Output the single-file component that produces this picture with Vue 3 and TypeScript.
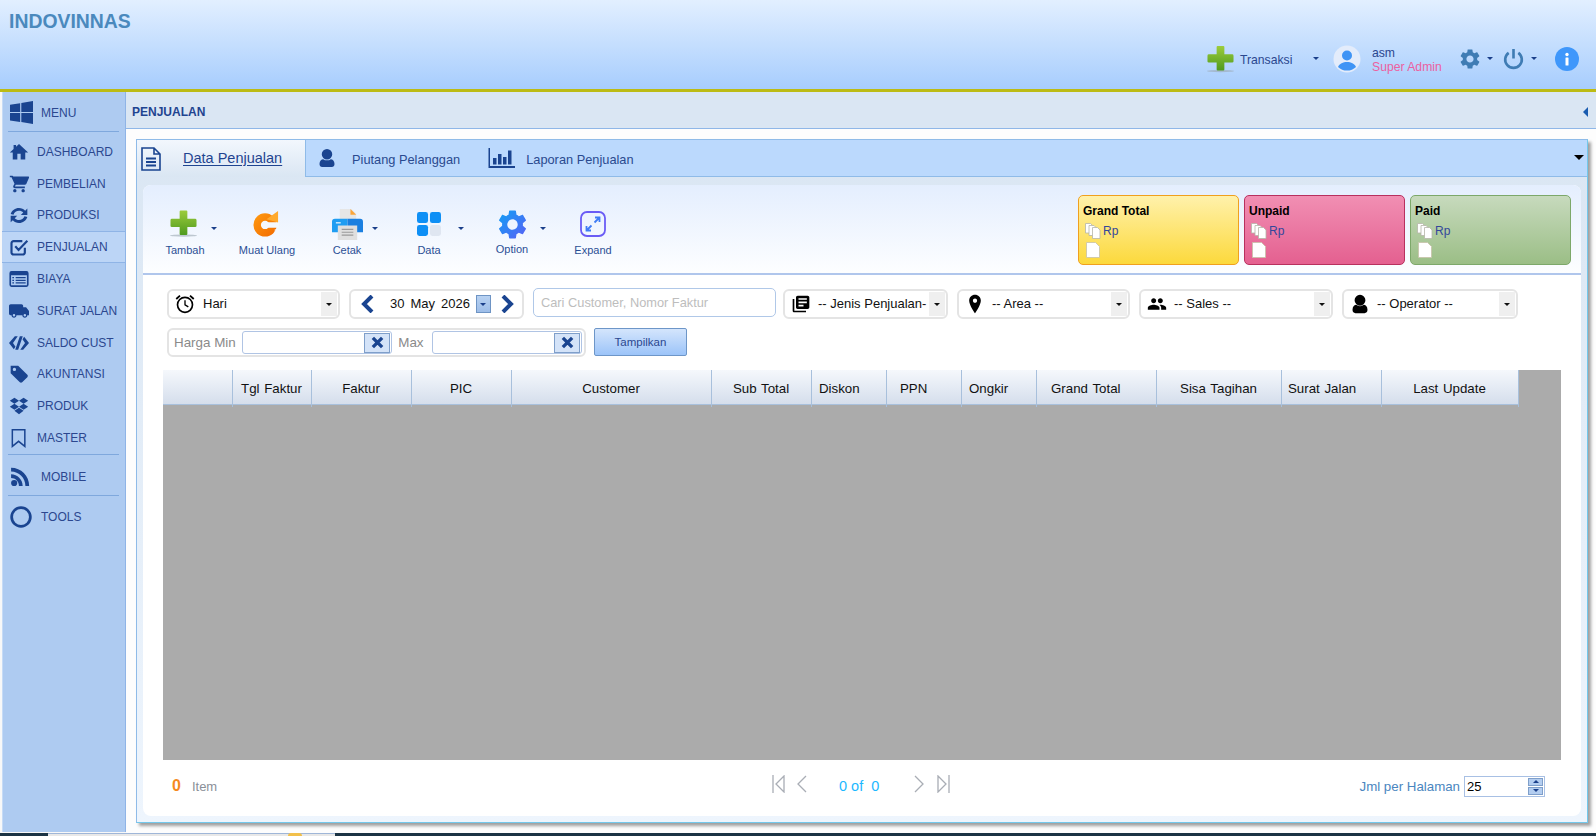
<script setup lang="ts">
import { computed } from 'vue'

interface NavItem {
  label: string
  d: string
  active?: boolean
  stroke?: boolean
  thin?: boolean
}

const navTop: NavItem[] = [
  { label: 'DASHBOARD', d: 'M10 21v-7h4v7h5.5v-8.5H23L12 2.5 8.5 5.6V3.5H5.5v4.8L1 12.5h3.5V21z' },
  { label: 'PEMBELIAN', d: 'M7 18c-1.1 0-2 .9-2 2s.9 2 2 2 2-.9 2-2-.9-2-2-2zM1 2v2h2l3.6 7.59-1.35 2.45c-.16.28-.25.61-.25.96 0 1.1.9 2 2 2h12v-2H7.42c-.14 0-.25-.11-.25-.25l.03-.12.9-1.63h10.9c.75 0 1.41-.41 1.75-1.03L24 4.5c.08-.14.12-.31.12-.48 0-.55-.45-1-1-1H5.21l-.94-1H1zm16 16c-1.1 0-2 .9-2 2s.9 2 2 2 2-.9 2-2-.9-2-2-2z' },
  { label: 'PRODUKSI', d: 'M12 3.5c3 0 5.6 1.3 7.4 3.3L22 4.2V12h-7.8l2.9-2.9C15.9 7.8 14 7 12 7c-3 0-5.6 1.9-6.6 4.6L2 10.7C3.4 6.5 7.3 3.5 12 3.5zM2 13h7.8l-2.9 2.9C8.1 17.2 10 18 12 18c3 0 5.6-1.9 6.6-4.6l3.4.9c-1.4 4.2-5.3 7.2-10 7.2-3 0-5.6-1.3-7.4-3.3L2 20.8z' },
  { label: 'PENJUALAN', active: true, stroke: true, d: 'M19 13v5.5a2.5 2.5 0 0 1-2.5 2.5h-11A2.5 2.5 0 0 1 3 18.5v-11A2.5 2.5 0 0 1 5.5 5H16M7.5 11l4 4.5L22 4.5' },
  { label: 'BIAYA', d: 'M3 2.5h18A2.5 2.5 0 0 1 23.5 5v14a2.5 2.5 0 0 1-2.5 2.5H3A2.5 2.5 0 0 1 .5 19V5A2.5 2.5 0 0 1 3 2.5zM2.5 7.5v12h19v-12zM4 9.5h2V11H4zM8 9.5h12V11H8zM4 12.8h2v1.5H4zM8 12.8h12v1.5H8zM4 16h2v1.5H4zM8 16h12v1.5H8z' },
  { label: 'SURAT JALAN', d: 'M17 7.5h3.5L24 12v5h-2c0 1.66-1.34 3-3 3s-3-1.34-3-3H9c0 1.66-1.34 3-3 3s-3-1.34-3-3H2c-1.1 0-2-.9-2-2V6c0-1.1.9-2 2-2h13c1.1 0 2 .9 2 2zM6 18.5a1.5 1.5 0 1 0 0-3 1.5 1.5 0 0 0 0 3zm13 0a1.5 1.5 0 1 0 0-3 1.5 1.5 0 0 0 0 3z' },
  { label: 'SALDO CUST', d: 'M7 4h3.5L4.8 12l3 4.5-2 3L0 12zM17 20h-3.5l5.7-8-3-4.5 2-3L24 12zM13 4h3.5L11 20H7.5z' },
  { label: 'AKUNTANSI', d: 'M2 2h9l11 11c.8.8.8 2 0 2.8L15.8 22c-.8.8-2 .8-2.8 0L2 11zM6.5 8.5a2 2 0 1 0 0-4 2 2 0 0 0 0 4z' },
  { label: 'PRODUK', d: 'M6.5 2L12 5.6 6.5 9.2 1 5.6zM17.5 2L23 5.6l-5.5 3.6L12 5.6zM1 12.8l5.5-3.6 5.5 3.6-5.5 3.6zM17.5 9.2l5.5 3.6-5.5 3.6-5.5-3.6zM6.5 17.7l5.5-3.5 5.5 3.5-5.5 4.1z' },
  { label: 'MASTER', stroke: true, thin: true, d: 'M4 2h15v20l-7.5-6L4 22z' },
]

const rssPath = 'M5 15.5a3.7 3.7 0 1 1 0 7.4 3.7 3.7 0 0 1 0-7.4zM1.3 8.8c7.6 0 13.9 6.3 13.9 13.9h-4.5c0-5.2-4.2-9.4-9.4-9.4zM1.3 1c12 0 21.7 9.7 21.7 21.7h-4.5C18.5 13.2 10.8 5.5 1.3 5.5z'

const tools = [
  { label: 'Tambah', kind: 'plus', caret: true },
  { label: 'Muat Ulang', kind: 'reload', caret: false },
  { label: 'Cetak', kind: 'print', caret: true },
  { label: 'Data', kind: 'data', caret: true },
  { label: 'Option', kind: 'option', caret: true },
  { label: 'Expand', kind: 'expand', caret: false },
]

const gearPath = 'M19.14 12.94c.04-.3.06-.61.06-.94 0-.32-.02-.64-.07-.94l2.03-1.58c.18-.14.23-.41.12-.61l-1.92-3.32c-.12-.22-.37-.29-.59-.22l-2.39.96c-.5-.38-1.03-.7-1.62-.94l-.36-2.54c-.04-.24-.24-.41-.48-.41h-3.84c-.24 0-.43.17-.47.41l-.36 2.54c-.59.24-1.13.57-1.62.94l-2.39-.96c-.22-.08-.47 0-.59.22L2.74 8.87c-.12.21-.08.47.12.61l2.03 1.58c-.05.3-.09.63-.09.94s.02.64.07.94l-2.03 1.58c-.18.14-.23.41-.12.61l1.92 3.32c.12.22.37.29.59.22l2.39-.96c.5.38 1.03.7 1.62.94l.36 2.54c.05.24.24.41.48.41h3.84c.24 0 .44-.17.47-.41l.36-2.54c.59-.24 1.13-.56 1.62-.94l2.39.96c.22.08.47 0 .59-.22l1.92-3.32c.12-.22.07-.47-.12-.61l-2.01-1.58zM12 15.6c-1.98 0-3.6-1.62-3.6-3.6s1.62-3.6 3.6-3.6 3.6 1.62 3.6 3.6-1.62 3.6-3.6 3.6z'

const stats = [
  { title: 'Grand Total', tone: 'yellow' },
  { title: 'Unpaid', tone: 'pink' },
  { title: 'Paid', tone: 'green' },
]

const combos = [
  { text: '-- Jenis Penjualan-', cls: 'jenis', d: 'M4 6H2v14c0 1.1.9 2 2 2h14v-2H4V6zm16-4H8c-1.1 0-2 .9-2 2v12c0 1.1.9 2 2 2h12c1.1 0 2-.9 2-2V4c0-1.1-.9-2-2-2zm-1 9H9V9h10v2zm-4 4H9v-2h6v2zm4-8H9V5h10v2z' },
  { text: '-- Area --', cls: 'area', d: 'M12 1C8.13 1 5 4.13 5 8c0 5.25 7 15 7 15s7-9.75 7-15c0-3.87-3.13-7-7-7zm0 9.5c-1.38 0-2.5-1.12-2.5-2.5s1.12-2.5 2.5-2.5 2.5 1.12 2.5 2.5-1.12 2.5-2.5 2.5z' },
  { text: '-- Sales --', cls: 'sales', d: 'M16 11c1.66 0 2.99-1.34 2.99-3S17.66 5 16 5c-1.66 0-3 1.34-3 3s1.34 3 3 3zm-8 0c1.66 0 2.99-1.34 2.99-3S9.66 5 8 5C6.34 5 5 6.34 5 8s1.34 3 3 3zm0 2c-2.33 0-7 1.17-7 3.5V19h14v-2.5c0-2.33-4.67-3.5-7-3.5zm8 0c-.29 0-.62.02-.97.05 1.16.84 1.97 1.97 1.97 3.45V19h6v-2.5c0-2.33-4.67-3.5-7-3.5z' },
  { text: '-- Operator --', cls: 'operator', d: 'M12 1a6.5 6.5 0 1 1 0 13 6.5 6.5 0 0 1 0-13zM3 19c0-4 2.5-6 4.5-6 1.2 1 2.8 1.6 4.5 1.6s3.3-.6 4.5-1.6c2 0 4.5 2 4.5 6 0 2.5-1.5 4-3.5 4h-11C4.5 23 3 21.5 3 19z' },
]

const columns = [
  { name: '', w: 70, pad: 0 },
  { name: 'Tgl Faktur', w: 79, pad: 0 },
  { name: 'Faktur', w: 100, pad: 0 },
  { name: 'PIC', w: 100, pad: 0 },
  { name: 'Customer', w: 200, pad: 0 },
  { name: 'Sub Total', w: 100, pad: 0 },
  { name: 'Diskon', w: 75, pad: 7 },
  { name: 'PPN', w: 75, pad: 13 },
  { name: 'Ongkir', w: 75, pad: 7 },
  { name: 'Grand Total', w: 120, pad: 14 },
  { name: 'Sisa Tagihan', w: 125, pad: 0 },
  { name: 'Surat Jalan', w: 100, pad: 6 },
  { name: 'Last Update', w: 137, pad: 0 },
]

const gridCols = computed(() => columns.map((c) => `${c.w}px`).join(' '))
</script>

<template>
  <div class="app">
    <header class="topbar">
      <div class="brand">INDOVINNAS</div>
      <div class="top-actions">
        <svg class="top-plus" viewBox="0 0 28 28">
          <defs>
            <linearGradient id="plusGrad" x1="0" y1="0" x2="0" y2="1">
              <stop offset="0" stop-color="#9ccc3c" />
              <stop offset="1" stop-color="#4f9a1e" />
            </linearGradient>
            <linearGradient id="reloadGrad" x1="0" y1="0" x2="1" y2="1">
              <stop offset="0" stop-color="#ff9a10" />
              <stop offset="1" stop-color="#f26a00" />
            </linearGradient>
            <linearGradient id="optGrad" x1="0" y1="0" x2="1" y2="1">
              <stop offset="0" stop-color="#10a0f5" />
              <stop offset="1" stop-color="#5a60f5" />
            </linearGradient>
          </defs>
          <ellipse cx="14" cy="26.5" rx="14" ry="1.2" fill="#9aa6b0" opacity="0.6" />
          <path d="M10 1.5q0-1 1-1h6q1 0 1 1V9h8q1.5 0 1.5 1.5v6q0 1-1.5 1h-8V25q0 1-1 1h-6q-1 0-1-1v-7.5H2q-1.5 0-1.5-1v-6Q.5 9 2 9h8z" fill="url(#plusGrad)" />
        </svg>
        <span class="transaksi">Transaksi</span>
        <i class="caret navy tr-caret"></i>
        <svg class="avatar" viewBox="0 0 28 28">
          <circle cx="14" cy="14" r="13.5" fill="#e3ecfb" />
          <circle cx="14" cy="10.5" r="5" fill="#3f94f5" />
          <path d="M5 22c1.5-3.5 5-5 9-5s7.5 1.5 9 5a13 13 0 0 1-18 0z" fill="#3f94f5" />
        </svg>
        <div class="who">
          <span>asm</span>
          <span class="role">Super Admin</span>
        </div>
        <svg class="gear" viewBox="0 0 24 24"><path :d="gearPath" fill="#3f7cb4" /></svg>
        <i class="caret navy"></i>
        <svg class="power" viewBox="0 0 24 24" fill="none" stroke="#3f7cb4" stroke-width="3">
          <path d="M6.5 5.5a9.5 9.5 0 1 0 11 0M12 1v11" />
        </svg>
        <i class="caret navy"></i>
        <svg class="info" viewBox="0 0 24 24">
          <circle cx="12" cy="12" r="12" fill="#3f97fb" />
          <circle cx="12" cy="7.5" r="1.7" fill="#fff" />
          <rect x="10.5" y="10.5" width="3" height="8" rx="0.5" fill="#fff" />
        </svg>
      </div>
    </header>

    <div class="body">
      <aside class="sidebar">
        <div class="side-big head">
          <svg class="ic-win" viewBox="0 0 24 24">
            <path d="M0 3.8L10.6 2.3V11.4H0zM11.8 2.1L24 0V11.4H11.8zM0 12.6H10.6V21.8L0 20.3zM11.8 12.6H24V24L11.8 22z" fill="#1a4490" />
          </svg>
          <span>MENU</span>
        </div>
        <div class="side-sep"></div>
        <div class="side-list">
          <div v-for="n in navTop" :key="n.label" class="side-row" :class="{ active: n.active }">
            <span class="side-ic">
              <svg viewBox="0 0 24 24">
                <path v-if="n.stroke" :d="n.d" fill="none" stroke="#1a4490" :stroke-width="n.thin ? 1.8 : 2.6" />
                <path v-else :d="n.d" fill="#1a4490" fill-rule="evenodd" />
              </svg>
            </span>
            <span>{{ n.label }}</span>
          </div>
        </div>
        <div class="side-sep"></div>
        <div class="side-big mobile">
          <svg class="ic-rss" viewBox="0 0 24 24"><path :d="rssPath" fill="#1a4490" /></svg>
          <span>MOBILE</span>
        </div>
        <div class="side-sep"></div>
        <div class="side-big tools">
          <svg class="ic-ring" viewBox="0 0 24 24"><circle cx="12" cy="12" r="10.2" fill="none" stroke="#1a4490" stroke-width="3" /></svg>
          <span>TOOLS</span>
        </div>
      </aside>

      <main class="main">
        <div class="title-bar">
          <b>PENJUALAN</b>
          <i class="tri-left"></i>
        </div>

        <section class="panel">
          <nav class="tabs">
            <div class="tab current">
              <svg class="tab-doc" viewBox="0 0 20 24" fill="none" stroke="#1a4490" stroke-width="1.6">
                <path d="M1 1h12l6 6v16H1zM13 1v6h6" />
                <path d="M5 11.5h10M5 15h10M5 18.5h10" stroke-width="1.8" />
              </svg>
              <span>Data Penjualan</span>
            </div>
            <div class="tab piutang">
              <svg viewBox="0 0 24 24"><path d="M12 0a7 7 0 1 1 0 14 7 7 0 0 1 0-14zM2 20c0-4 2.5-6.5 5-6.5 1.3 1 3 1.6 5 1.6s3.7-.6 5-1.6c2.5 0 5 2.5 5 6.5 0 2.5-1.5 4-3.5 4h-13C3.5 24 2 22.5 2 20z" fill="#1a4490" /></svg>
              <span>Piutang Pelanggan</span>
            </div>
            <div class="tab laporan">
              <svg viewBox="0 0 27 20" fill="#1a4490">
                <path d="M.5 0H2v18h25v2H.5z" />
                <rect x="5" y="10" width="3.5" height="6.5" />
                <rect x="10" y="6" width="3.5" height="10.5" />
                <rect x="15" y="9" width="3.5" height="7.5" />
                <rect x="20" y="2.5" width="3.5" height="14" />
              </svg>
              <span>Laporan Penjualan</span>
            </div>
            <i class="tri-down"></i>
          </nav>

          <div class="panel-body">
            <div class="card">
              <div class="toolbar">
                <div class="tools-row">
                  <div v-for="t in tools" :key="t.label" class="tool" :class="t.kind">
                    <svg v-if="t.kind === 'plus'" class="t-ic" viewBox="0 0 28 28">
                      <ellipse cx="14" cy="26.5" rx="14" ry="1.2" fill="#9aa6b0" opacity="0.6" />
                      <path d="M10 1.5q0-1 1-1h6q1 0 1 1V9h8q1.5 0 1.5 1.5v6q0 1-1.5 1h-8V25q0 1-1 1h-6q-1 0-1-1v-7.5H2q-1.5 0-1.5-1v-6Q.5 9 2 9h8z" fill="url(#plusGrad)" />
                    </svg>
                    <svg v-else-if="t.kind === 'reload'" class="t-ic" viewBox="0 0 28 28">
                      <circle cx="13" cy="15" r="12.5" fill="url(#reloadGrad)" />
                      <circle cx="13" cy="15" r="4.5" fill="#f4f8fe" />
                      <path d="M13 12h15v6H13z" fill="#f4f8fe" />
                      <path d="M13 19.5h15V28H19q4-2 4.5-8.5z" fill="#f4f8fe" opacity="0.6" />
                      <path d="M14.5 9L27 0v12.5z" fill="#ffa92c" />
                    </svg>
                    <svg v-else-if="t.kind === 'print'" class="t-ic" viewBox="0 0 32 32">
                      <path d="M8 0h12l5 5v8H8z" fill="#e6e6e6" />
                      <path d="M19 0l6 6h-6z" fill="#fba53a" />
                      <path d="M3 10h13v14H0V13q0-3 3-3z" fill="#1f9df2" />
                      <path d="M16 10h13q3 0 3 3v11H16z" fill="#1a7fe0" />
                      <rect x="4" y="13.5" width="5" height="1.5" fill="#cfe8fb" />
                      <path d="M6 17h20v15H6z" fill="#dfdfdf" />
                      <path d="M10 21h12M10 24h12M10 27h12" stroke="#9a9a9a" stroke-width="1.2" />
                    </svg>
                    <svg v-else-if="t.kind === 'data'" class="t-ic" viewBox="0 0 25 25">
                      <rect width="11.5" height="11.5" rx="2.5" fill="#0e8ff5" />
                      <rect x="13.5" width="11.5" height="11.5" rx="2.5" fill="#0e8ff5" />
                      <rect y="13.5" width="11.5" height="11.5" rx="2.5" fill="#0e8ff5" />
                      <rect x="13.5" y="13.5" width="11.5" height="11.5" rx="2.5" fill="#dfe6f1" />
                    </svg>
                    <svg v-else-if="t.kind === 'option'" class="t-ic" viewBox="2 2 20 20"><path :d="gearPath" fill="url(#optGrad)" /></svg>
                    <svg v-else class="t-ic" viewBox="0 0 26 26" fill="none">
                      <rect x="1" y="1" width="24" height="24" rx="6" stroke="#6a5cf5" stroke-width="1.8" />
                      <path d="M15 6.5h4.5V11M19.5 6.5l-5 5M11 19.5H6.5V15M6.5 19.5l5-5" stroke="#3f7cf5" stroke-width="1.8" />
                    </svg>
                    <span class="t-label">{{ t.label }}</span>
                    <i v-if="t.caret" class="caret navy t-caret"></i>
                  </div>
                </div>
                <div class="stats">
                  <div v-for="s in stats" :key="s.title" class="stat" :class="s.tone">
                    <b>{{ s.title }}</b>
                    <div class="stat-line">
                      <svg class="s-copies" viewBox="0 0 17 16" fill="#fff" stroke="#b5b5a8" stroke-width="0.8">
                        <path d="M.5.5h5L8 3v7H.5z" />
                        <path d="M4 2.5h5L11.5 5v7.5H4z" />
                        <path d="M7.5 4.5h5L15 7v8.5H7.5z" />
                      </svg>
                      <span>Rp</span>
                    </div>
                    <svg class="s-page" viewBox="0 0 14 16" fill="#fff" stroke="#c6c2a8" stroke-width="0.8">
                      <path d="M.5.5h9l4 4v11H.5z" />
                    </svg>
                  </div>
                </div>
              </div>

              <div class="filters">
                <div class="f-row">
                  <div class="box combo hari">
                    <svg class="f-ic" viewBox="0 0 24 24" fill="none" stroke="#000" stroke-width="2">
                      <circle cx="12" cy="13" r="9" />
                      <path d="M12 7.5V13l4 2.5" stroke-width="1.6" />
                      <path d="M1.5 6L6 2M22.5 6L18 2" stroke-width="2.2" />
                    </svg>
                    <span class="c-text">Hari</span>
                    <span class="c-arrow"><i class="caret black"></i></span>
                  </div>
                  <div class="box date">
                    <svg class="chev" viewBox="0 0 14 18"><path d="M11 1L3 9l8 8" fill="none" stroke="#1a4490" stroke-width="4" /></svg>
                    <span class="d-day">30</span>
                    <span class="d-mon">May</span>
                    <span class="d-yr">2026</span>
                    <span class="d-btn"><i class="caret navy"></i></span>
                    <svg class="chev" viewBox="0 0 14 18"><path d="M3 1l8 8-8 8" fill="none" stroke="#1a4490" stroke-width="4" /></svg>
                  </div>
                  <div class="search">Cari Customer, Nomor Faktur</div>
                  <div v-for="c in combos" :key="c.text" class="box combo" :class="c.cls">
                    <svg class="f-ic" viewBox="0 0 24 24"><path :d="c.d" fill="#000" /></svg>
                    <span class="c-text">{{ c.text }}</span>
                    <span class="c-arrow"><i class="caret black"></i></span>
                  </div>
                </div>
                <div class="f-row second">
                  <div class="box price">
                    <span class="p-label">Harga Min</span>
                    <div class="p-input">
                      <span class="p-x"><svg viewBox="0 0 14 14"><path d="M2 2l10 10M12 2L2 12" stroke="#1a4490" stroke-width="3.6" /></svg></span>
                    </div>
                    <span class="p-label max">Max</span>
                    <div class="p-input">
                      <span class="p-x"><svg viewBox="0 0 14 14"><path d="M2 2l10 10M12 2L2 12" stroke="#1a4490" stroke-width="3.6" /></svg></span>
                    </div>
                  </div>
                  <button type="button" class="show-btn">Tampilkan</button>
                </div>
              </div>

              <div class="grid">
                <div class="grid-head" :style="{ gridTemplateColumns: gridCols }">
                  <div
                    v-for="(c, i) in columns"
                    :key="i"
                    class="th"
                    :class="{ left: c.pad > 0 }"
                    :style="c.pad > 0 ? { paddingLeft: c.pad + 'px' } : undefined"
                  >{{ c.name }}</div>
                </div>
              </div>

              <footer class="foot">
                <div class="count"><b>0</b><span>Item</span></div>
                <div class="pager">
                  <svg class="pg first" viewBox="0 0 13 18" fill="none" stroke="#a9adb5" stroke-width="1.3"><path d="M1 0v18M12 1L4 9l8 8z" /></svg>
                  <svg class="pg prev" viewBox="0 0 11 18" fill="none" stroke="#a9adb5" stroke-width="1.3"><path d="M10 1L2 9l8 8" /></svg>
                  <span class="pg-text">0 of&nbsp; 0</span>
                  <svg class="pg next" viewBox="0 0 11 18" fill="none" stroke="#a9adb5" stroke-width="1.3"><path d="M1 1l8 8-8 8" /></svg>
                  <svg class="pg last" viewBox="0 0 13 18" fill="none" stroke="#a9adb5" stroke-width="1.3"><path d="M12 0v18M1 1l8 8-8 8z" /></svg>
                </div>
                <div class="per-page">
                  <span>Jml per Halaman</span>
                  <div class="spin">
                    <em>25</em>
                    <div class="spin-btns">
                      <span><i class="caret navy up"></i></span>
                      <span><i class="caret navy"></i></span>
                    </div>
                  </div>
                </div>
              </footer>
            </div>
          </div>
        </section>
      </main>
    </div>

    <div class="taskbar">
      <div class="task-light"><i></i></div>
    </div>
  </div>
</template>

<style>
html,
body {
  margin: 0;
  padding: 0;
}
</style>

<style scoped>
.app {
  width: 1596px;
  height: 836px;
  display: flex;
  flex-direction: column;
  overflow: hidden;
  background: #f8f8f8;
  font-family: 'Liberation Sans', Arial, sans-serif;
  color: #2b478f;
}

svg {
  display: block;
  flex: none;
}

i {
  display: block;
}

.caret {
  width: 0;
  height: 0;
  border-left: 3px solid transparent;
  border-right: 3px solid transparent;
  border-top: 3px solid #1a3f8a;
}

.caret.black {
  border-top-color: #111;
}

.caret.up {
  border-top: 0;
  border-bottom: 3px solid #1a3f8a;
}

/* header */
.topbar {
  height: 89px;
  flex: none;
  border-bottom: 3px solid #bcbb14;
  background: linear-gradient(#e2efff, #a7cdfd);
  position: relative;
}

.brand {
  position: absolute;
  left: 9px;
  top: 10px;
  font-size: 19.4px;
  font-weight: 700;
  color: #4a89bd;
}

.top-actions {
  position: absolute;
  right: 17px;
  top: 44px;
  height: 29px;
  display: flex;
  align-items: center;
}

.top-plus {
  width: 27px;
  height: 28px;
}

.transaksi {
  margin-left: 6px;
  margin-top: 2px;
  font-size: 12.2px;
  width: 73px;
}

.tr-caret {
  margin-right: 1px;
}

.avatar {
  width: 28px;
  height: 28px;
  margin-left: 13px;
}

.who {
  margin-left: 11px;
  margin-top: 2px;
  width: 86px;
  display: flex;
  flex-direction: column;
  font-size: 12.2px;
  line-height: 14px;
}

.role {
  color: #ec60a0;
}

.gear {
  width: 24px;
  height: 24px;
}

.gear + .caret {
  margin-left: 5px;
  margin-right: 10px;
}

.power {
  width: 21px;
  height: 23px;
}

.power + .caret {
  margin-left: 7px;
  margin-right: 18px;
}

.info {
  width: 24px;
  height: 24px;
}

/* sidebar */
.body {
  flex: 1;
  min-height: 0;
  display: flex;
}

.sidebar {
  width: 124px;
  margin-left: 2px;
  margin-bottom: 1px;
  flex: none;
  background: #aecbf1;
  border-right: 1px solid #8fb4e6;
  box-sizing: border-box;
  font-size: 12px;
  box-shadow: inset 1px 0 0 #c6dbf6;
}

.side-big {
  height: 40px;
  display: flex;
  align-items: center;
  padding-left: 8px;
  box-sizing: border-box;
}

.side-big.head {
  height: 39px;
  padding-top: 2px;
}

.side-big.mobile {
  padding-top: 4px;
}

.ic-win {
  width: 23px;
  height: 23px;
  margin-right: 8px;
}

.ic-rss {
  width: 20px;
  height: 20px;
  margin-right: 11px;
}

.ic-ring {
  width: 22px;
  height: 22px;
  margin-right: 9px;
}

.tools {
  height: 42px;
}

.side-sep {
  height: 1px;
  margin: 0 6px;
  background: #7fa8dd;
}

.side-list {
  padding-top: 4px;
}

.side-row {
  height: 31.8px;
  box-sizing: border-box;
  display: flex;
  align-items: center;
  padding-left: 7px;
}

.side-row.active {
  background: #bcd5f6;
  border-top: 1px solid #8fb4e6;
  border-bottom: 1px solid #8fb4e6;
}

.side-ic {
  width: 28px;
  flex: none;
}

.side-ic svg {
  width: 20px;
  height: 20px;
}

/* main */
.main {
  flex: 1;
  min-width: 0;
  display: flex;
  flex-direction: column;
  background: #fdfdfd;
}

.title-bar {
  height: 37px;
  flex: none;
  box-sizing: border-box;
  display: flex;
  align-items: center;
  justify-content: space-between;
  padding: 3px 8px 0 6px;
  background: #dae6f3;
  border-bottom: 1px solid #8fb7e8;
  font-size: 12px;
  color: #1f4490;
}

.tri-left {
  width: 0;
  height: 0;
  border-top: 5px solid transparent;
  border-bottom: 5px solid transparent;
  border-right: 5px solid #1a5cb0;
}

.panel {
  margin: 10px 8px 10px 10px;
  flex: 1;
  min-height: 0;
  display: flex;
  flex-direction: column;
  box-sizing: border-box;
  border: 1px solid #8fbbe8;
  border-right-color: #72c8ec;
  border-bottom-color: #72c8ec;
  box-shadow: 3px 3px 3px #a0a0a0;
  background: linear-gradient(#dae6f3, #eef5fd);
}

.tabs {
  height: 37px;
  flex: none;
  display: flex;
  align-items: center;
  position: relative;
  background: #bbd9fd;
  border-bottom: 1px solid #8fbbe8;
  box-sizing: border-box;
  font-size: 12.8px;
  color: #2a4a8f;
}

.tab {
  height: 100%;
  display: flex;
  align-items: center;
}

.tab.current {
  width: 169px;
  height: 37px;
  box-sizing: border-box;
  padding-left: 4px;
  margin-bottom: -1px;
  background: linear-gradient(#f2f7fd, #dae6f3);
  border-right: 1px solid #8fbbe8;
  font-size: 14.5px;
  color: #1f4490;
}

.tab.current span {
  margin-left: 22px;
  margin-bottom: 2px;
  text-decoration: underline;
  text-underline-offset: 2px;
}

.tab-doc {
  width: 20px;
  height: 24px;
}

.tab.piutang {
  margin-left: 12px;
}

.tab.piutang svg {
  width: 18px;
  height: 20px;
}

.tab.piutang span {
  margin-left: 16px;
  margin-top: 2px;
}

.tab.laporan {
  margin-left: 28px;
}

.tab.laporan svg {
  width: 27px;
  height: 20px;
}

.tab.laporan span {
  margin-left: 11px;
  margin-top: 2px;
}

.tri-down {
  position: absolute;
  right: 3px;
  top: 15px;
  width: 0;
  height: 0;
  border-left: 5px solid transparent;
  border-right: 5px solid transparent;
  border-top: 5px solid #000;
}

.panel-body {
  flex: 1;
  min-height: 0;
  padding: 8px 6px 6px;
  display: flex;
}

.card {
  flex: 1;
  min-width: 0;
  display: flex;
  flex-direction: column;
  background: #fff;
  border-radius: 8px;
  overflow: hidden;
}

/* toolbar */
.toolbar {
  height: 88px;
  flex: none;
  display: flex;
  justify-content: space-between;
  border-bottom: 2px solid #b0c6ec;
  background: linear-gradient(#e4eefe, #fdfeff);
  padding: 0 10px 0 1px;
}

.tools-row {
  display: flex;
}

.tool {
  width: 82px;
  position: relative;
  display: flex;
  flex-direction: column;
  align-items: center;
  font-size: 11px;
  color: #2b4f95;
}

.tool.print {
  margin-left: -2px;
}

.tool.option {
  margin-left: 1px;
}

.tool.expand {
  margin-left: -1px;
}

.t-ic {
  position: absolute;
  top: 27px;
  width: 24px;
  height: 24px;
}

.tool.plus .t-ic {
  top: 25px;
  width: 27px;
  height: 27px;
  margin-left: -4px;
}

.tool.reload .t-ic {
  top: 26px;
  width: 26px;
  height: 26px;
  margin-left: -2px;
}

.tool.print .t-ic {
  top: 24px;
  width: 31px;
  height: 31px;
}

.tool.option .t-ic {
  top: 25px;
  width: 29px;
  height: 29px;
}

.tool.expand .t-ic {
  top: 26px;
  width: 26px;
  height: 26px;
}

.t-label {
  margin-top: 59px;
}

.tool.option .t-label {
  margin-top: 58px;
}

.t-caret {
  position: absolute;
  top: 42px;
  left: 67px;
}

.tool.print .t-caret {
  left: 66px;
}

.tool.data .t-caret {
  left: 70px;
}

.tool.option .t-caret {
  left: 69px;
}

.stats {
  display: flex;
  gap: 5px;
  padding-top: 10px;
}

.stat {
  width: 161px;
  height: 70px;
  box-sizing: border-box;
  border: 1px solid;
  border-radius: 5px;
  padding: 8px 4px 0;
  font-size: 12px;
  color: #000;
}

.stat.yellow {
  background: linear-gradient(#fff1ab, #fcd93c);
  border-color: #f0a01e;
}

.stat.pink {
  background: linear-gradient(#f18fb3, #e46090);
  border-color: #b8305e;
}

.stat.green {
  background: linear-gradient(#c7dabd, #9bbe86);
  border-color: #7da86a;
}

.stat b {
  display: block;
  line-height: 14px;
}

.stat-line {
  display: flex;
  align-items: center;
  margin-top: 5px;
  height: 16px;
  color: #34479b;
}

.s-copies {
  width: 17px;
  height: 16px;
  margin-left: 2px;
  margin-right: 1px;
}

.s-page {
  width: 14px;
  height: 16px;
  margin: 3px 0 0 3px;
}

/* filters */
.filters {
  flex: none;
  padding: 14px 0 0 24px;
  color: #111;
  font-size: 13px;
}

.f-row {
  display: flex;
  gap: 9px;
}

.f-row.second {
  margin-top: 9px;
}

.box {
  height: 30px;
  box-sizing: border-box;
  border: 2px solid #e4e4e4;
  border-radius: 6px;
  display: flex;
  align-items: center;
  background: #fff;
}

.combo.hari {
  width: 173px;
}

.combo.jenis {
  width: 165px;
}

.combo.area {
  width: 173px;
}

.combo.sales {
  width: 194px;
}

.combo.operator {
  width: 176px;
}

.f-ic {
  width: 20px;
  height: 20px;
  margin-left: 6px;
  flex: none;
}

.c-text {
  margin-left: 7px;
  margin-bottom: 2px;
  flex: 1;
  min-width: 0;
  white-space: nowrap;
}

.combo.hari .c-text {
  margin-left: 8px;
}

.c-arrow {
  width: 16px;
  height: 24px;
  margin-right: 1px;
  flex: none;
  background: #efefef;
  display: flex;
  align-items: center;
  justify-content: center;
}

.date {
  width: 175px;
  padding-left: 10px;
}

.date span:not(.d-btn) {
  margin-bottom: 2px;
}

.chev {
  width: 14px;
  height: 18px;
}

.d-day {
  margin-left: 15px;
}

.d-mon {
  margin-left: 6px;
}

.d-yr {
  margin-left: 6px;
}

.d-btn {
  width: 15px;
  height: 18px;
  margin-left: 6px;
  margin-right: 9px;
  box-sizing: border-box;
  border: 1px solid #6e94c4;
  background: linear-gradient(#b8d2f2, #9dbde8);
  display: flex;
  align-items: center;
  justify-content: center;
}

.search {
  width: 243px;
  height: 29px;
  margin: -1px -2px 0 0;
  box-sizing: border-box;
  border: 1px solid #b0c8e8;
  border-radius: 5px;
  padding-left: 7px;
  font-size: 12.8px;
  line-height: 27px;
  color: #bdbdbd;
  background: #fff;
}

.price {
  width: 419px;
  height: 29px;
  padding: 0 2px 0 5px;
}

.p-label {
  color: #8a8a8a;
  margin-right: 6px;
  font-size: 13.4px;
  white-space: nowrap;
}

.p-label.max {
  margin-left: 6px;
  margin-right: 8px;
}

.p-input {
  width: 151px;
  height: 23px;
  box-sizing: border-box;
  border: 1px solid #b0c4e4;
  border-radius: 3px;
  display: flex;
  justify-content: flex-end;
  align-items: center;
  padding-right: 1px;
}

.p-x {
  width: 26px;
  height: 20px;
  box-sizing: border-box;
  border: 1px solid #7f9fca;
  background: #d4e3f8;
  display: flex;
  align-items: center;
  justify-content: center;
}

.p-x svg {
  width: 13px;
  height: 13px;
}

.show-btn {
  width: 93px;
  height: 28px;
  margin-left: -1px;
  border: 1px solid #6d96c8;
  border-radius: 2px;
  background: linear-gradient(#d4e5fc, #9cc4f9);
  color: #2b478f;
  font: 11.5px 'Liberation Sans', Arial, sans-serif;
  padding: 0;
}

/* grid */
.grid {
  flex: 1;
  min-height: 0;
  margin: 13px 20px 0;
  background: #ababab;
}

.grid-head {
  display: grid;
  justify-content: start;
  height: 35px;
  box-sizing: border-box;
  border-bottom: 1px solid #a8c0dc;
  background: linear-gradient(#f5f8fc, #d5deec);
  width: 1356px;
  color: #111;
  font-size: 13.3px;
  word-spacing: 1px;
}

.th {
  border-right: 1px solid #a8c0dc;
  padding-right: 1px;
  text-align: center;
  line-height: 37px;
  white-space: nowrap;
}

.th.left {
  text-align: left;
}

/* footer */
.foot {
  height: 56px;
  flex: none;
  box-sizing: border-box;
  display: grid;
  grid-template-columns: 1fr auto 1fr;
  align-items: center;
  padding: 0 36px 4px 29px;
  font-size: 13px;
}

.count {
  display: flex;
  align-items: center;
}

.count b {
  color: #f58a1e;
  font-size: 16px;
}

.count span {
  margin-left: 11px;
  color: #8a8f98;
}

.pager {
  display: flex;
  align-items: center;
  margin-left: 5px;
}

.pg {
  width: 13px;
  height: 18px;
  transform: translateY(-2px);
}

.pg.prev,
.pg.next {
  width: 11px;
}

.pg.prev {
  margin-left: 11px;
}

.pg.last {
  margin-left: 12px;
}

.pg-text {
  width: 107px;
  padding-left: 32px;
  box-sizing: border-box;
  color: #1cb8ff;
  font-size: 14.5px;
  white-space: nowrap;
}

.per-page {
  justify-self: end;
  display: flex;
  align-items: center;
  color: #4a86c0;
}

.per-page > span {
  font-size: 13.3px;
}

.spin {
  width: 81px;
  height: 21px;
  margin-left: 4px;
  box-sizing: border-box;
  border: 1px solid #a8c0e4;
  display: flex;
  align-items: center;
  justify-content: space-between;
  padding: 0 1px 0 2px;
  background: #fff;
}

.spin em {
  font-style: normal;
  color: #000;
  font-size: 13px;
}

.spin-btns {
  width: 15px;
  height: 17px;
  display: flex;
  flex-direction: column;
  gap: 1px;
}

.spin-btns span {
  flex: 1;
  box-sizing: border-box;
  border: 1px solid #7f9fca;
  background: #b3cdf0;
  display: flex;
  align-items: center;
  justify-content: center;
}

.taskbar {
  height: 3px;
  flex: none;
  background: #1b3344;
  position: relative;
}

.task-light {
  position: absolute;
  left: 48px;
  top: 0;
  width: 287px;
  height: 3px;
  background: #e8e8e8;
  box-shadow: inset 0 1px 0 #9fb6d8;
}

.task-light i {
  position: absolute;
  left: 240px;
  top: 0;
  width: 14px;
  height: 3px;
  background: #f2c04a;
  border-radius: 7px 7px 0 0;
}
</style>
